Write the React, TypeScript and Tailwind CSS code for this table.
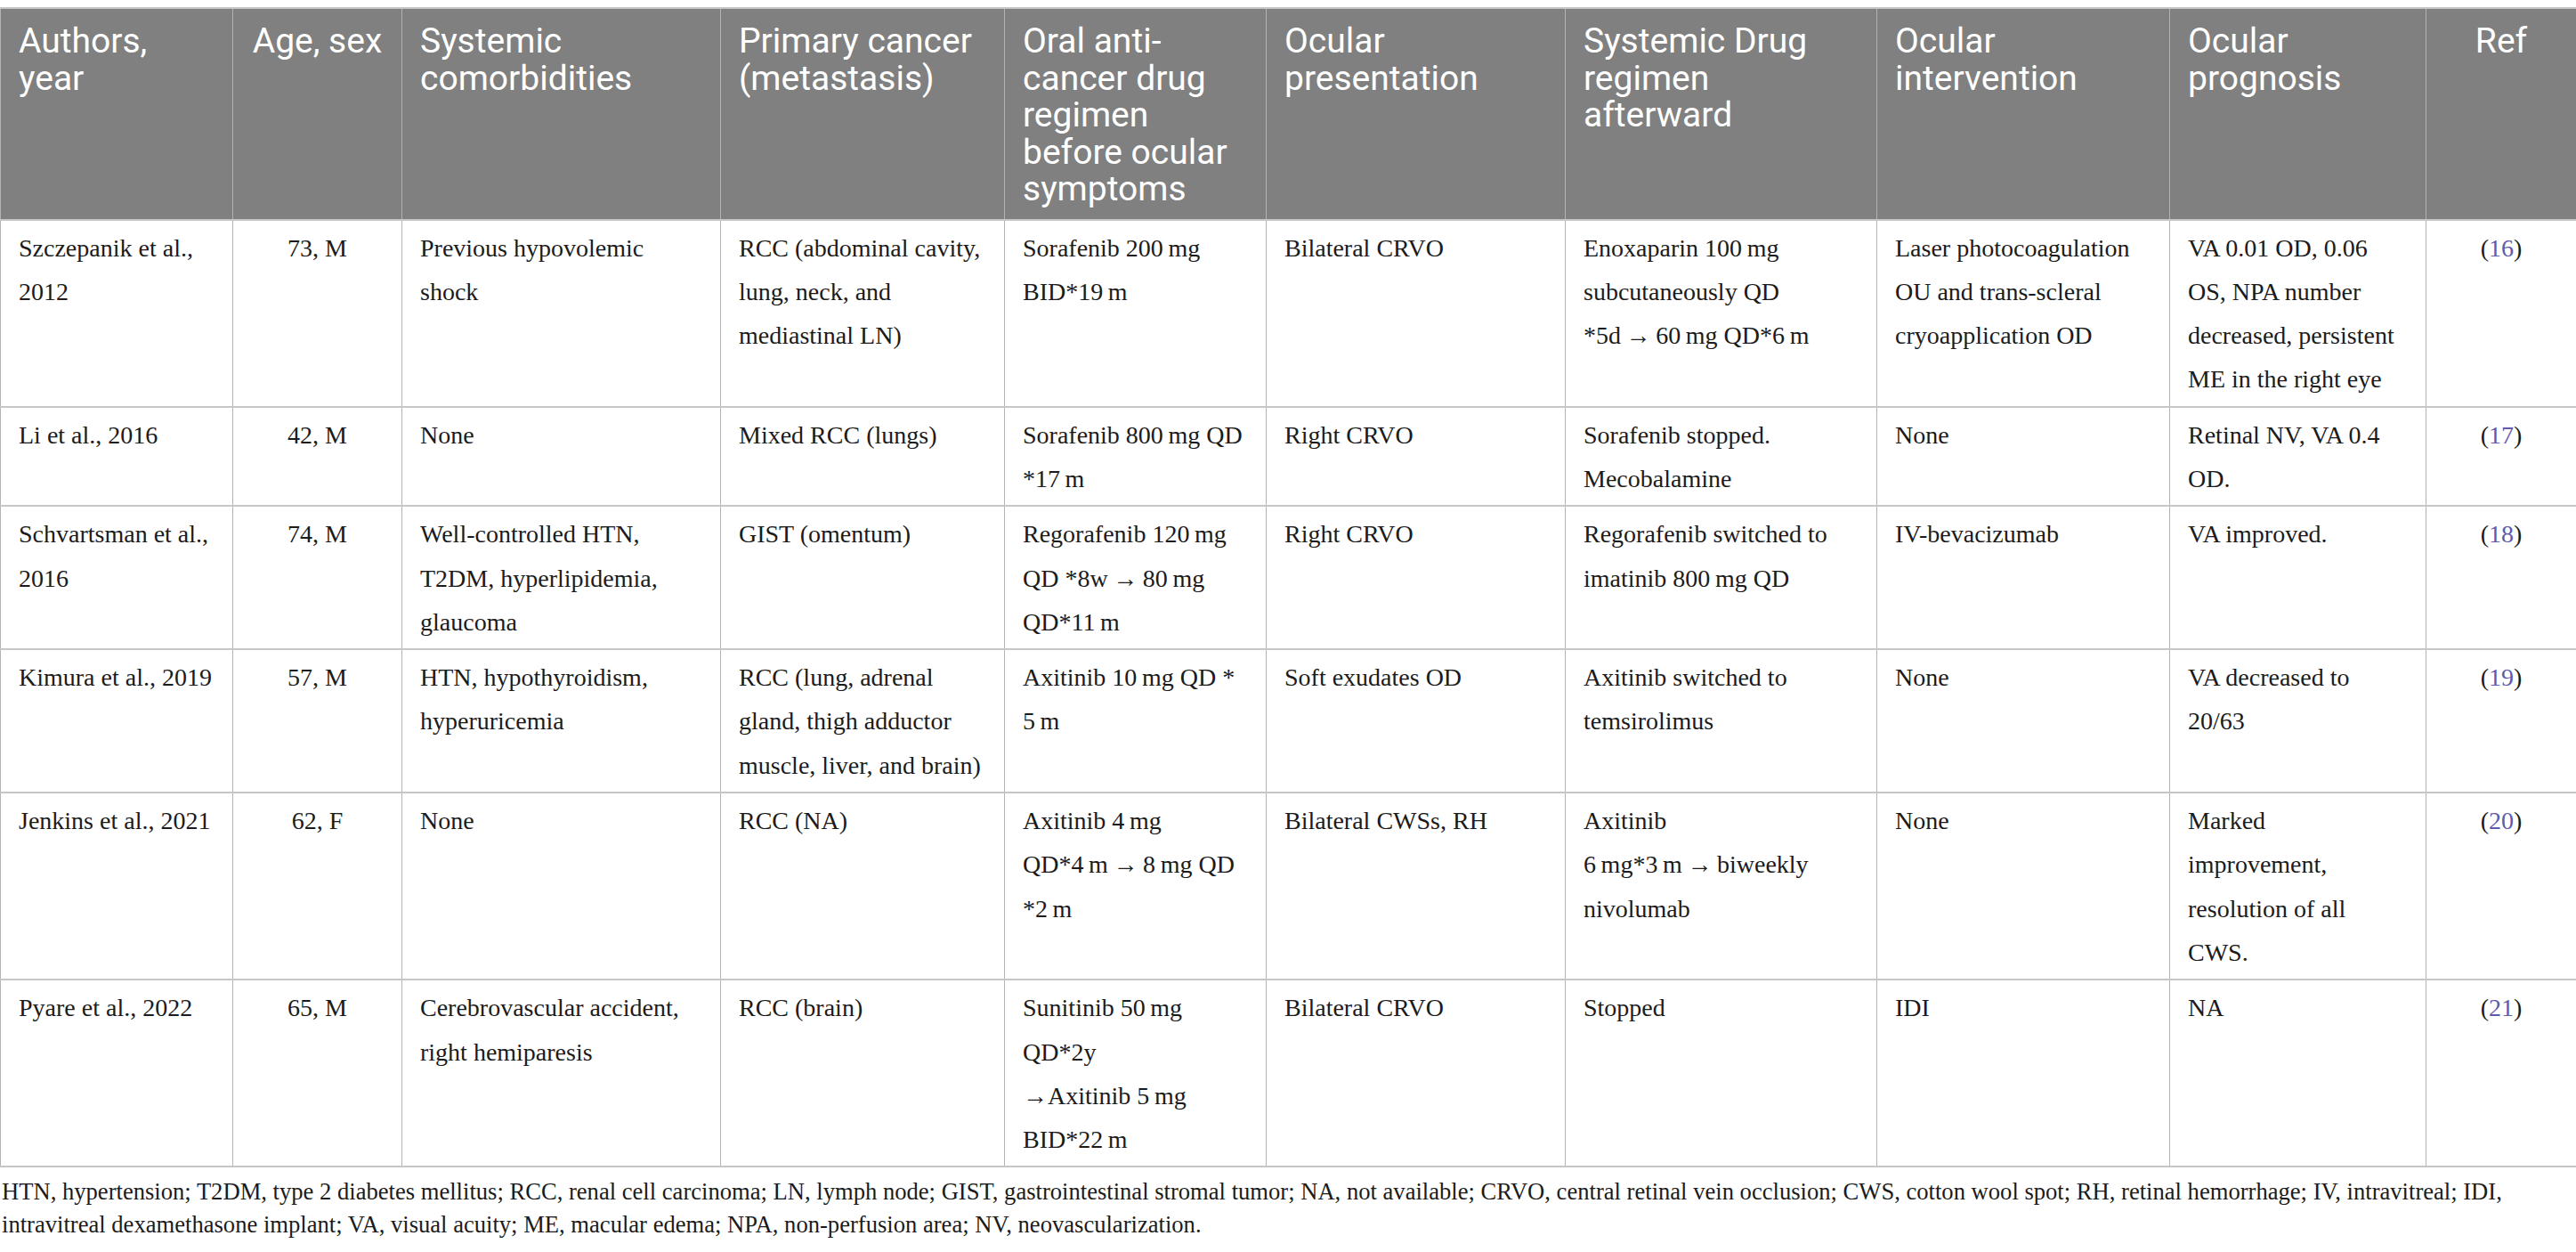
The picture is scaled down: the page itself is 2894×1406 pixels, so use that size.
const serif = "font-['Liberation_Serif','Times_New_Roman',serif]";

type Row = { cells: string[][]; ref: string };

const header: { lines: string[]; center?: boolean }[] = [
  { lines: ["Authors,", "year"] },
  { lines: ["Age, sex"], center: true },
  { lines: ["Systemic", "comorbidities"] },
  { lines: ["Primary cancer", "(metastasis)"] },
  { lines: ["Oral anti-", "cancer drug", "regimen", "before ocular", "symptoms"] },
  { lines: ["Ocular", "presentation"] },
  { lines: ["Systemic Drug", "regimen", "afterward"] },
  { lines: ["Ocular", "intervention"] },
  { lines: ["Ocular", "prognosis"] },
  { lines: ["Ref"], center: true },
];

const rows: Row[] = [
  {
    cells: [
      ["Szczepanik et al.,", "2012"],
      ["73, M"],
      ["Previous hypovolemic", "shock"],
      ["RCC (abdominal cavity,", "lung, neck, and", "mediastinal LN)"],
      ["Sorafenib 200\u2009mg", "BID*19\u2009m"],
      ["Bilateral CRVO"],
      ["Enoxaparin 100\u2009mg", "subcutaneously QD", "*5d\u2009\u2192\u200960\u2009mg QD*6\u2009m"],
      ["Laser photocoagulation", "OU and trans-scleral", "cryoapplication OD"],
      ["VA 0.01 OD, 0.06", "OS, NPA number", "decreased, persistent", "ME in the right eye"],
    ],
    ref: "16",
  },
  {
    cells: [
      ["Li et al., 2016"],
      ["42, M"],
      ["None"],
      ["Mixed RCC (lungs)"],
      ["Sorafenib 800\u2009mg QD", "*17\u2009m"],
      ["Right CRVO"],
      ["Sorafenib stopped.", "Mecobalamine"],
      ["None"],
      ["Retinal NV, VA 0.4", "OD."],
    ],
    ref: "17",
  },
  {
    cells: [
      ["Schvartsman et al.,", "2016"],
      ["74, M"],
      ["Well-controlled HTN,", "T2DM, hyperlipidemia,", "glaucoma"],
      ["GIST (omentum)"],
      ["Regorafenib 120\u2009mg", "QD *8w\u2009\u2192\u200980\u2009mg", "QD*11\u2009m"],
      ["Right CRVO"],
      ["Regorafenib switched to", "imatinib 800\u2009mg QD"],
      ["IV-bevacizumab"],
      ["VA improved."],
    ],
    ref: "18",
  },
  {
    cells: [
      ["Kimura et al., 2019"],
      ["57, M"],
      ["HTN, hypothyroidism,", "hyperuricemia"],
      ["RCC (lung, adrenal", "gland, thigh adductor", "muscle, liver, and brain)"],
      ["Axitinib 10\u2009mg QD *", "5\u2009m"],
      ["Soft exudates OD"],
      ["Axitinib switched to", "temsirolimus"],
      ["None"],
      ["VA decreased to", "20/63"],
    ],
    ref: "19",
  },
  {
    cells: [
      ["Jenkins et al., 2021"],
      ["62, F"],
      ["None"],
      ["RCC (NA)"],
      ["Axitinib 4\u2009mg", "QD*4\u2009m\u2009\u2192\u20098\u2009mg QD", "*2\u2009m"],
      ["Bilateral CWSs, RH"],
      ["Axitinib", "6\u2009mg*3\u2009m\u2009\u2192\u2009biweekly", "nivolumab"],
      ["None"],
      ["Marked", "improvement,", "resolution of all", "CWS."],
    ],
    ref: "20",
  },
  {
    cells: [
      ["Pyare et al., 2022"],
      ["65, M"],
      ["Cerebrovascular accident,", "right hemiparesis"],
      ["RCC (brain)"],
      ["Sunitinib 50\u2009mg", "QD*2y", "\u2192Axitinib 5\u2009mg", "BID*22\u2009m"],
      ["Bilateral CRVO"],
      ["Stopped"],
      ["IDI"],
      ["NA"],
    ],
    ref: "21",
  },
];

function Lines({ lines }: { lines: string[] }) {
  return (
    <>
      {lines.map((l, i) => (
        <span key={i} className="block whitespace-nowrap">
          {l}
        </span>
      ))}
    </>
  );
}

export default function App() {
  return (
    <div className="min-h-screen bg-white pt-[8px] text-[#1b1b1b]">
      <table className="w-full table-fixed border-collapse">
        <colgroup>
          <col className="w-[261px]" />
          <col className="w-[190px]" />
          <col className="w-[358px]" />
          <col className="w-[319px]" />
          <col className="w-[294px]" />
          <col className="w-[336px]" />
          <col className="w-[350px]" />
          <col className="w-[329px]" />
          <col className="w-[288px]" />
          <col className="w-[169px]" />
        </colgroup>

        {/* Header */}
        <thead>
          <tr className="bg-[#808080]">
            {header.map((h, i) => (
              <th
                key={i}
                className={`border-x border-y-2 border-x-[#b3b3b3] border-y-[#c6c6c6] px-[20px] pt-[16px] pb-[12px] align-top font-['Roboto',sans-serif] text-[39px] font-normal leading-[41.5px] text-white ${
                  h.center ? "text-center" : "text-left"
                }`}
              >
                <Lines lines={h.lines} />
              </th>
            ))}
          </tr>
        </thead>

        <tbody>
          {rows.map((r, ri) => (
            <tr key={ri}>
              {r.cells.map((c, ci) => (
                <td
                  key={ci}
                  className={`border-x border-y-2 border-x-[#b3b3b3] border-y-[#c6c6c6] px-[20px] pt-[6px] pb-[5px] align-top ${serif} text-[28px] leading-[49.3px] ${
                    ci === 1 ? "text-center" : "text-left"
                  }`}
                >
                  <Lines lines={c} />
                </td>
              ))}
              <td
                className={`border-x border-y-2 border-x-[#b3b3b3] border-y-[#c6c6c6] px-[20px] pt-[6px] pb-[5px] text-center align-top ${serif} text-[28px] leading-[49.3px]`}
              >
                (<span className="text-[#5f5aab]">{r.ref}</span>)
              </td>
            </tr>
          ))}
        </tbody>
      </table>

      {/* Footnote */}
      <p className={`mt-[9px] pl-[2px] ${serif} text-[26.6px] leading-[37px]`}>
        HTN, hypertension; T2DM, type 2 diabetes mellitus; RCC, renal cell carcinoma; LN, lymph node; GIST,
        gastrointestinal stromal tumor; NA, not available; CRVO, central retinal vein occlusion; CWS, cotton wool
        spot; RH, retinal hemorrhage; IV, intravitreal; IDI, intravitreal dexamethasone implant; VA, visual acuity;
        ME, macular edema; NPA, non-perfusion area; NV, neovascularization.
      </p>
    </div>
  );
}
